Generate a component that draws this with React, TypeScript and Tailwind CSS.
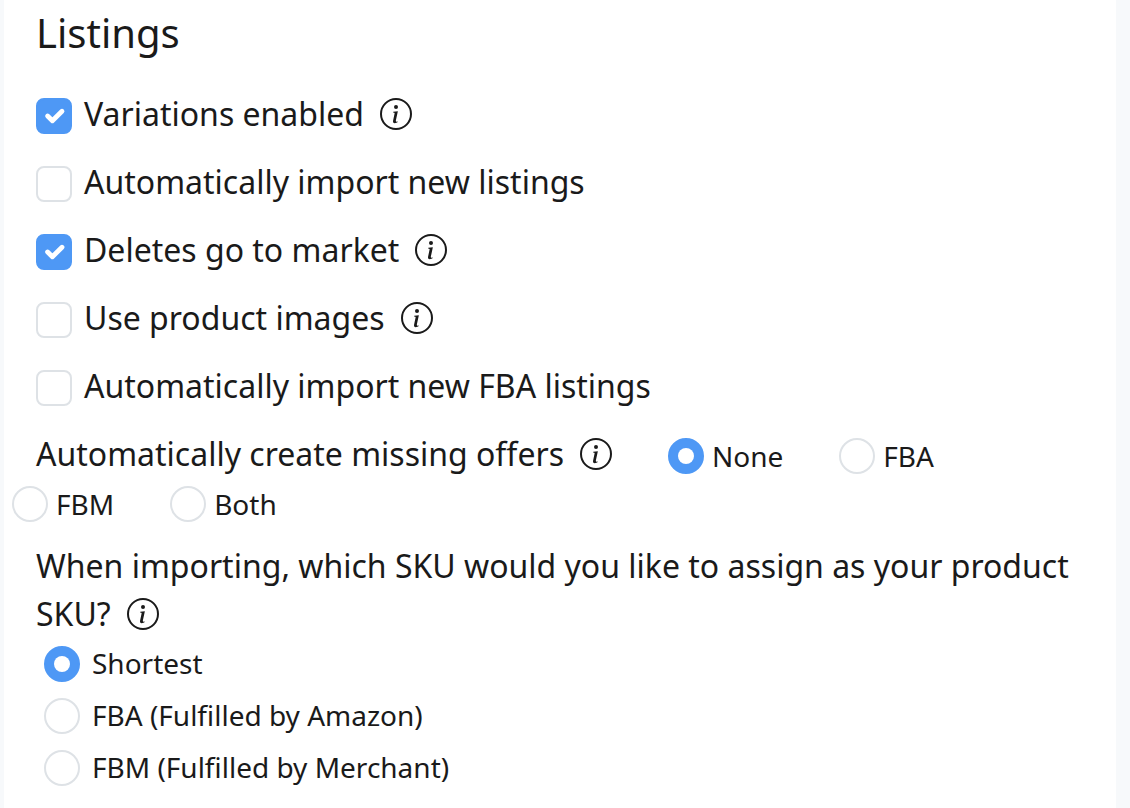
import type { InputHTMLAttributes, ReactNode } from "react";
import { BsInfoCircle } from "react-icons/bs";

const LISTING_OPTIONS = [
  { id: "variations", label: "Variations enabled", checked: true, info: true },
  { id: "auto-import", label: "Automatically import new listings", checked: false, info: false },
  { id: "deletes", label: "Deletes go to market", checked: true, info: true },
  { id: "product-images", label: "Use product images", checked: false, info: true },
  { id: "auto-import-fba", label: "Automatically import new FBA listings", checked: false, info: false },
];

const OFFER_OPTIONS = ["None", "FBA", "FBM", "Both"];

const SKU_OPTIONS = ["Shortest", "FBA (Fulfilled by Amazon)", "FBM (Fulfilled by Merchant)"];

const InfoIcon = () => <BsInfoCircle className="ml-4 inline size-8 align-[-4px]" aria-hidden="true" />;

type ControlProps = InputHTMLAttributes<HTMLInputElement>;

const Checkbox = (props: ControlProps) => (
  <span className="grid size-9 shrink-0 place-items-center">
    <input
      type="checkbox"
      className="peer col-start-1 row-start-1 size-9 appearance-none rounded-lg border-2 border-[#dee2e6] bg-white checked:border-[#4e98f5] checked:bg-[#4e98f5]"
      {...props}
    />
    <svg
      viewBox="0 0 20 20"
      className="pointer-events-none invisible col-start-1 row-start-1 size-8 peer-checked:visible"
      aria-hidden="true"
    >
      <path d="m6 10 3 3 6-6" fill="none" stroke="#fff" strokeWidth="3" strokeLinecap="round" strokeLinejoin="round" />
    </svg>
  </span>
);

const Radio = (props: ControlProps) => (
  <span className="grid size-9 shrink-0 place-items-center">
    <input
      type="radio"
      className="peer col-start-1 row-start-1 size-9 appearance-none rounded-full border-2 border-[#dee2e6] bg-white checked:border-[#4e98f5] checked:bg-[#4e98f5]"
      {...props}
    />
    <span className="pointer-events-none invisible col-start-1 row-start-1 size-4 rounded-full bg-white peer-checked:visible" />
  </span>
);

const Legend = ({ id, children }: { id: string; children: ReactNode }) => (
  <p id={id} className="text-[32px] leading-12">
    {children}
    <InfoIcon />
  </p>
);

export default function App() {
  return (
    <div className="min-h-screen bg-[#f7f9fb] pr-[14px] pl-1 font-['Noto_Sans',sans-serif] text-[#1a1a1a]">
      <main className="min-h-screen bg-white px-8 pt-2 pb-5">
        <h1 className="mb-8 text-[40px] leading-[50px]">Listings</h1>

        {LISTING_OPTIONS.map((o) => (
          <div key={o.id} className="mb-5 flex items-start gap-3">
            <span className="pt-2">
              <Checkbox id={o.id} defaultChecked={o.checked} />
            </span>
            <label htmlFor={o.id} className="text-[32px] leading-12">
              {o.label}
              {o.info && <InfoIcon />}
            </label>
          </div>
        ))}

        {/* radios that wrap hang to the left of the text column */}
        <div role="radiogroup" aria-labelledby="offers" className="mb-4 -ml-6 flex flex-wrap gap-x-14">
          <div className="ml-6">
            <Legend id="offers">Automatically create missing offers</Legend>
          </div>
          {OFFER_OPTIONS.map((name, i) => (
            <label key={name} className="flex h-12 items-start gap-2 pt-2 text-[28px] leading-9">
              <Radio name="offers" value={name} defaultChecked={i === 0} />
              {name}
            </label>
          ))}
        </div>

        <div role="radiogroup" aria-labelledby="sku">
          <Legend id="sku">When importing, which SKU would you like to assign as your product SKU?</Legend>
          <div className="mt-1 ml-2 flex flex-col items-start gap-[10px]">
            {SKU_OPTIONS.map((name, i) => (
              <label key={name} className="flex items-start gap-3 text-[28px] leading-[42px]">
                <span className="pt-1">
                  <Radio name="sku" value={name} defaultChecked={i === 0} />
                </span>
                {name}
              </label>
            ))}
          </div>
        </div>
      </main>
    </div>
  );
}
